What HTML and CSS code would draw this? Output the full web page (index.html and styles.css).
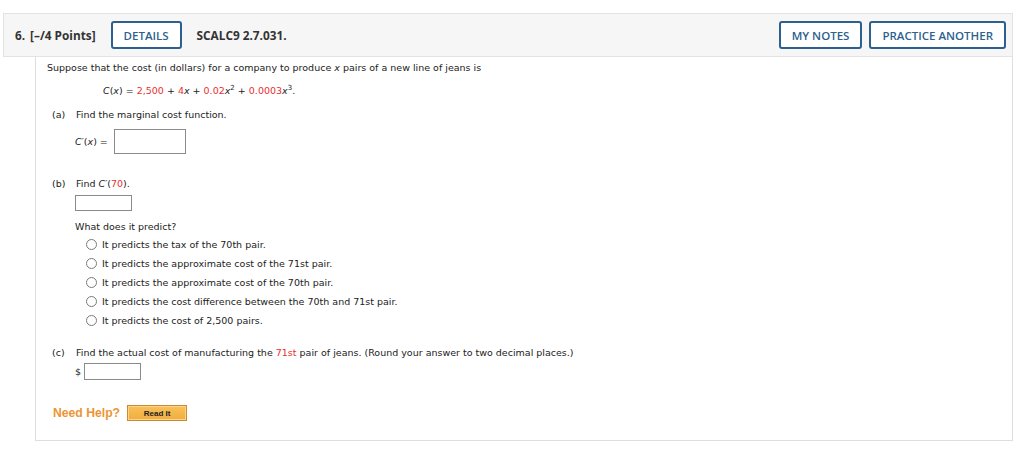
FILE: index.html
```html
<!DOCTYPE html>
<html>
<head>
<meta charset="utf-8">
<link rel="stylesheet" href="styles.css">
</head>
<body>
<div class="question">
  <div class="qhead">
    <span class="qnum">6.</span>
    <span class="qpts">[–/4 Points]</span>
    <button class="btn details">DETAILS</button>
    <span class="qcode">SCALC9 2.7.031.</span>
    <span class="spacer"></span>
    <button class="btn">MY NOTES</button>
    <button class="btn">PRACTICE ANOTHER</button>
  </div>
  <div class="qbody">
    <p class="line intro">Suppose that the cost (in dollars) for a company to produce <i>x</i> pairs of a new line of jeans is</p>
    <p class="line formula"><i>C</i>(<i>x</i>) = <span class="red">2,500</span> + <span class="red">4</span><i>x</i> + <span class="red">0.02</span><i>x</i><sup>2</sup> + <span class="red">0.0003</span><i>x</i><sup>3</sup>.</p>

    <div class="part parta"><span class="plabel">(a)</span><span>Find the marginal cost function.</span></div>
    <div class="ansrow rowa"><span class="lhs"><i>C</i>′(<i>x</i>) =</span><span class="box boxa"></span></div>

    <div class="part partb"><span class="plabel">(b)</span><span>Find <i>C</i>′(<span class="red">70</span>).</span></div>
    <div class="ansrow rowb"><span class="box boxb"></span></div>
    <p class="line ask">What does it predict?</p>
    <ul class="choices">
      <li><span class="radio"></span>It predicts the tax of the 70th pair.</li>
      <li><span class="radio"></span>It predicts the approximate cost of the 71st pair.</li>
      <li><span class="radio"></span>It predicts the approximate cost of the 70th pair.</li>
      <li><span class="radio"></span>It predicts the cost difference between the 70th and 71st pair.</li>
      <li><span class="radio"></span>It predicts the cost of 2,500 pairs.</li>
    </ul>

    <div class="part partc"><span class="plabel">(c)</span><span>Find the actual cost of manufacturing the <span class="red">71st</span> pair of jeans. (Round your answer to two decimal places.)</span></div>
    <div class="ansrow rowc"><span class="dollar">$</span><span class="box boxc"></span></div>

    <div class="help"><span class="needhelp">Need Help?</span><span class="readit">Read It</span></div>
  </div>
</div>
</body>
</html>
```
FILE: styles.css
```css
* { box-sizing: border-box; }
html, body { margin: 0; padding: 0; background: #fff; }
body { padding: 13px 0 0 3px; }

.question { width: 1010px; }

.qhead {
  display: flex;
  align-items: center;
  height: 44px;
  padding: 0 6px 0 11px;
  background: #f6f6f6;
  border: 1px solid #e3e3e3;
  font-family: "Open Sans", sans-serif;
  font-weight: 700;
  font-size: 11.8px;
  color: #333;
}
.qnum { margin-right: 5px; }
.qpts { margin-right: 15px; }
.qcode { margin-left: 15px; }
.spacer { flex: 1; }

.btn {
  height: 28px;
  padding: 0 11px;
  border: 2px solid #2d5f8f;
  border-radius: 3px;
  background: #fff;
  color: #2d5f8f;
  font-family: "Open Sans", sans-serif;
  font-weight: 600;
  font-size: 11.5px;
  margin-left: 7px;
}
.btn.details { margin-left: 0; width: 71px; padding: 0; }

.qbody {
  margin-left: 32px;
  height: 384px;
  border: 1px solid #dedede;
  border-top: none;
  padding: 4px 0 0 11px;
  font-family: "DejaVu Sans", Verdana, sans-serif;
  font-size: 9.5px;
  color: #222;
}

.line { margin: 0; line-height: 14px; }
.intro { margin-top: 0; }
.formula { margin-top: 9px; padding-left: 56px; }
.formula sup { font-size: 7px; line-height: 0; vertical-align: 4px; }
.red { color: #e8302f; }

.part { display: flex; line-height: 14px; padding-left: 5px; }
.plabel { width: 24px; }
.parta { margin-top: 10px; }
.partb { margin-top: 23px; }
.partc { margin-top: 16px; }

.ansrow { display: flex; align-items: center; padding-left: 28px; }
.lhs { margin-right: 6px; }
.rowa { margin-top: 7px; }
.rowb { margin-top: 4px; }
.rowc { margin-top: 3px; }
.dollar { width: 9px; }

.box { display: block; border: 1px solid #8a8a8a; background: #fff; }
.boxa { width: 72px; height: 25px; }
.boxb { width: 57px; height: 16px; }
.boxc { width: 57px; height: 17px; }

.ask { margin-top: 9px; padding-left: 28px; }

.choices { list-style: none; margin: 1px 0 0; padding: 0 0 0 39px; }
.choices li { display: flex; align-items: center; height: 19px; }
.radio {
  width: 11px; height: 11px;
  border: 1px solid #7a7a7a;
  border-radius: 50%;
  margin-right: 5px;
  background: #fff;
}

.help { display: flex; align-items: center; margin-top: 25px; padding-left: 6px; }
.needhelp {
  font-family: "Liberation Sans", Arial, sans-serif;
  font-weight: 700;
  font-size: 12.2px;
  color: #ec9434;
  margin-right: 7px;
}
.readit {
  display: flex; align-items: center; justify-content: center;
  width: 60px; height: 16px;
  border: 1px solid #c98a35;
  background: linear-gradient(#f8c15a, #f1ad3e);
  box-shadow: inset 0 0 0 1px #fbd48a;
  font-family: "Liberation Sans", Arial, sans-serif;
  font-weight: 700;
  font-size: 8px;
  color: #222;
}
```
